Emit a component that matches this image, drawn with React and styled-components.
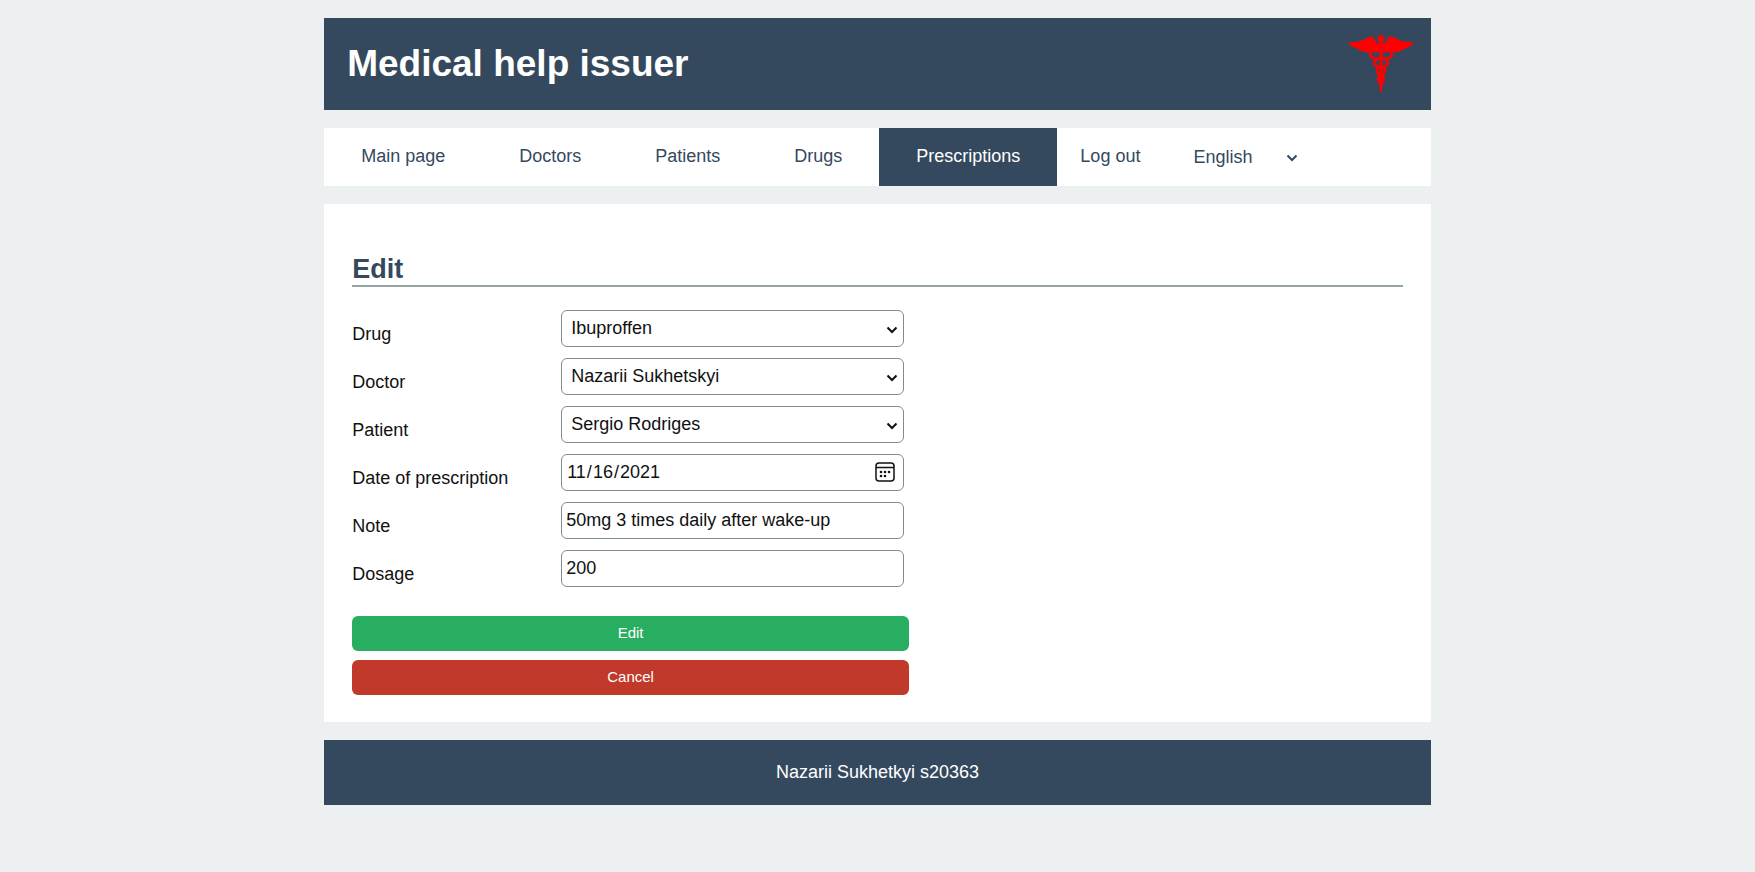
import React from 'react';
import styled, { createGlobalStyle } from 'styled-components';

const navy = '#34495e';

const GlobalStyle = createGlobalStyle`
  * { box-sizing: border-box; }
  body {
    margin: 0;
    background: #ecf0f1;
    color: #111;
    font: 18px/21px "Liberation Sans", Arial, sans-serif;
  }
`;

const Page = styled.div`
  width: calc(63% + 1px);
  min-width: 980px;
  margin: 0 auto;
  padding: 18px 0;
  display: flex;
  flex-direction: column;
  gap: 18px;
`;

const Header = styled.header`
  display: flex;
  justify-content: space-between;
  align-items: center;
  height: 92px;
  padding: 0 16px 0 23px;
  background: ${navy};
  color: #fff;
`;

const Title = styled.h1`
  margin: 0;
  font-size: 37px;
  line-height: 42px;
`;

const Nav = styled.nav`
  display: flex;
  align-items: stretch;
  height: 58px;
  background: #fff;
`;

const NavLink = styled.a`
  display: flex;
  align-items: center;
  padding: 0 ${(p) => (p.$compact ? 23 : 37)}px 2px;
  background: ${(p) => (p.$active ? navy : 'transparent')};
  color: ${(p) => (p.$active ? '#fff' : navy)};
  text-decoration: none;
`;

const SelectBox = styled.div`
  position: relative;
  display: flex;
  flex: 1;
`;

const LanguageBox = styled(SelectBox)`
  flex: none;
  width: 110px;
  margin-left: 30px;
  color: ${navy};
`;

const LanguageSelect = styled.select`
  appearance: none;
  width: 100%;
  padding: 0;
  border: 0;
  background: transparent;
  color: inherit;
  font: inherit;
`;

const Chevron = styled.svg`
  position: absolute;
  right: ${(p) => (p.$inset ? 11 : 5)}px;
  top: 50%;
  margin-top: -3px;
  fill: none;
  stroke: currentColor;
  stroke-width: 2;
  pointer-events: none;
`;

const Main = styled.main`
  padding: 50px 28px 27px;
  background: #fff;
`;

const Heading = styled.h2`
  margin: 0 0 23px;
  border-bottom: 2px solid #95a5a6;
  color: ${navy};
  font-size: 27px;
  line-height: 31px;
`;

const Form = styled.form`
  width: 53%;
`;

const Row = styled.div`
  display: flex;
  align-items: flex-start;
  height: 48px;
`;

const Label = styled.label`
  width: 209px;
  flex: none;
  padding-top: 14px;
`;

const Control = styled.input`
  flex: 1;
  min-width: 0;
  height: 37px;
  margin-right: 5px;
  padding: 0 4px;
  border: 1px solid #7f8c8d;
  border-radius: 6px;
  background: #fff;
  color: #111;
  font: inherit;
`;

const SelectControl = styled(Control)`
  appearance: none;
  padding: 0 24px 0 9px;
`;

const DateBox = styled.div`
  position: relative;
  flex: 1;
  display: flex;
`;

const DateControl = styled(Control)`
  &::-webkit-calendar-picker-indicator { opacity: 0; }
`;

const CalendarIcon = styled.svg`
  position: absolute;
  right: 14px;
  top: 8px;
  pointer-events: none;
`;

const Actions = styled.div`
  display: flex;
  flex-direction: column;
  gap: 9px;
  padding-top: 18px;
`;

const Button = styled.button`
  height: 35px;
  padding: 0 0 2px;
  border: 0;
  border-radius: 6px;
  background: ${(p) => (p.$danger ? '#c0392b' : '#27ae60')};
  color: #fff;
  font: 15px/17px "Liberation Sans", Arial, sans-serif;
`;

const Footer = styled.footer`
  padding: 22px;
  background: ${navy};
  color: #fff;
  text-align: center;
`;

const links = [
  { text: 'Main page' },
  { text: 'Doctors' },
  { text: 'Patients' },
  { text: 'Drugs' },
  { text: 'Prescriptions', active: true },
  { text: 'Log out', compact: true },
];

const Caduceus = () => (
  <svg width="68" height="60" viewBox="16 14 68 60" fill="none" stroke="#f00" aria-hidden="true">
    <g fill="#f00" stroke="none">
      <circle cx="50" cy="18.500" r="3.400" />
      <path d="M17 22.200Q29 22.500 35 18.500Q39 15.500 43 17Q43.500 23 48 23.500L49 21H51L52 23.500Q56.500 23 57 17Q61 15.500 65 18.500Q71 22.500 83 22.200Q80 27 74 28.500Q70 32 62 32.500H38Q30 32 26 28.500Q20 27 17 22.200Z" />
      <path d="M48.500 30H51.500V54L53.500 56L51.500 67L50.800 72H49.200L48.500 67L46.500 56L48.500 54Z" />
    </g>
    <g strokeWidth="2.600">
      <path d="M40 31Q37 38 45 38.500Q56.500 38 57 42.500Q57 46.500 50 47Q45.500 48 46 51Q46.500 54 50 55Q54 57 52 62" />
      <path d="M60 31Q63 38 55 38.500Q43.500 38 43 42.500Q43 46.500 50 47Q54.500 48 54 51Q53.500 54 50 55Q46 57 48 62" />
    </g>
  </svg>
);

const DownArrow = ({ inset }) => (
  <Chevron $inset={inset} width="12" height="8" viewBox="0 0 12 8" aria-hidden="true">
    <path d="M1.500 1.500L6 6L10.500 1.500" />
  </Chevron>
);

const SelectRow = ({ id, label, value }) => (
  <Row>
    <Label htmlFor={id}>{label}</Label>
    <SelectBox>
      <SelectControl as="select" id={id} defaultValue={value}>
        <option>{value}</option>
      </SelectControl>
      <DownArrow inset />
    </SelectBox>
  </Row>
);

export default function App() {
  return (
    <Page>
      <GlobalStyle />
      <Header>
        <Title>Medical help issuer</Title>
        <Caduceus />
      </Header>
      <Nav>
        {links.map((l) => (
          <NavLink key={l.text} href="#" $active={l.active} $compact={l.compact}>
            {l.text}
          </NavLink>
        ))}
        <LanguageBox>
          <LanguageSelect aria-label="Language" defaultValue="English">
            <option>English</option>
          </LanguageSelect>
          <DownArrow />
        </LanguageBox>
      </Nav>
      <Main>
        <Heading>Edit</Heading>
        <Form onSubmit={(e) => e.preventDefault()}>
          <SelectRow id="drug" label="Drug" value="Ibuproffen" />
          <SelectRow id="doctor" label="Doctor" value="Nazarii Sukhetskyi" />
          <SelectRow id="patient" label="Patient" value="Sergio Rodriges" />
          <Row>
            <Label htmlFor="date">Date of prescription</Label>
            <DateBox>
              <DateControl id="date" type="date" defaultValue="2021-11-16" />
              <CalendarIcon width="20" height="20" viewBox="0 0 20 20" fill="none" stroke="#111" strokeWidth="1.500" aria-hidden="true">
                <rect x="1" y="1" width="18" height="18" rx="3" />
                <path d="M1 5.500H19" />
                <g fill="#111" stroke="none">
                  <circle cx="6" cy="10" r="1.300" />
                  <circle cx="10" cy="10" r="1.300" />
                  <circle cx="14" cy="10" r="1.300" />
                  <circle cx="6" cy="14" r="1.300" />
                  <circle cx="10" cy="14" r="1.300" />
                </g>
              </CalendarIcon>
            </DateBox>
          </Row>
          <Row>
            <Label htmlFor="note">Note</Label>
            <Control id="note" type="text" defaultValue="50mg 3 times daily after wake-up" />
          </Row>
          <Row>
            <Label htmlFor="dosage">Dosage</Label>
            <Control id="dosage" type="text" defaultValue="200" />
          </Row>
          <Actions>
            <Button type="submit">Edit</Button>
            <Button type="button" $danger>Cancel</Button>
          </Actions>
        </Form>
      </Main>
      <Footer>Nazarii Sukhetkyi s20363</Footer>
    </Page>
  );
}
